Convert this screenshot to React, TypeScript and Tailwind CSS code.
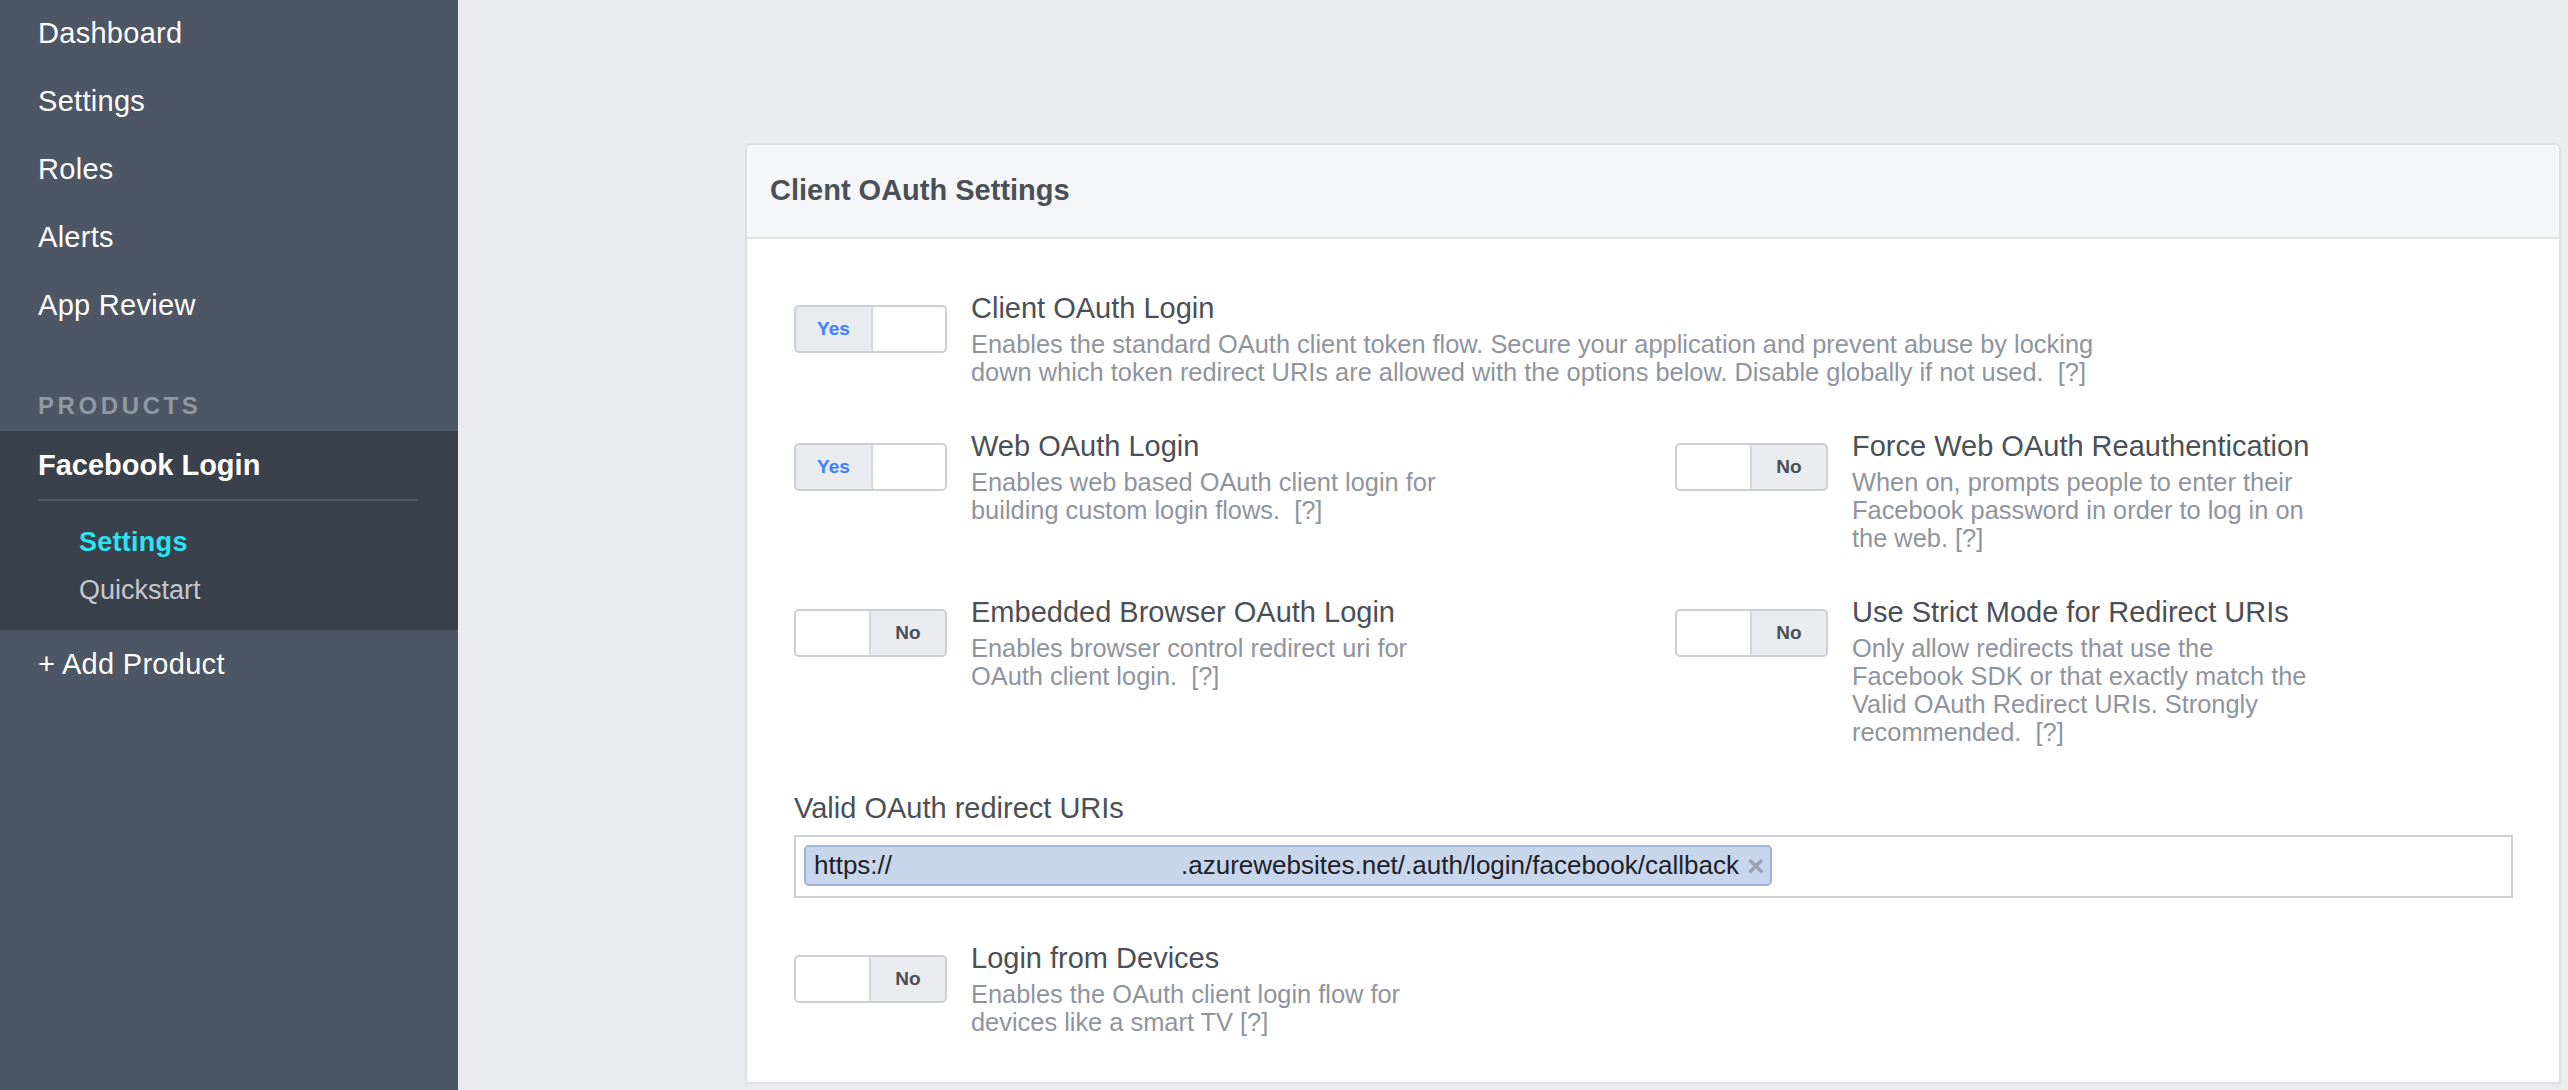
import React from 'react';

function Toggle({ on }: { on: boolean }) {
  return (
    <div className="mt-[15px] flex h-[48px] w-[153px] shrink-0 overflow-hidden rounded-[5px] border-2 border-[#ccd0d5] bg-[#e9ebee]">
      {on ? (
        <>
          <div className="flex w-[75px] items-center justify-center text-[19px] font-bold text-[#4080ff]">Yes</div>
          <div className="flex-1 rounded-[3px] border-l-2 border-[#d3d6db] bg-white" />
        </>
      ) : (
        <>
          <div className="w-[75px] rounded-[3px] border-r-2 border-[#d3d6db] bg-white" />
          <div className="flex flex-1 items-center justify-center text-[19px] font-bold text-[#4b4f56]">No</div>
        </>
      )}
    </div>
  );
}

function Setting({ on, title, lines }: { on: boolean; title: string; lines: string[] }) {
  return (
    <div className="flex items-start gap-[24px]">
      <Toggle on={on} />
      <div>
        <div className="whitespace-nowrap text-[29px] leading-[36px] text-[#4b4f56]">{title}</div>
        <div className="mt-[4px] whitespace-pre text-[25.4px] leading-[28px] text-[#90949c]">
          {lines.map((l, i) => (
            <div key={i}>{l}</div>
          ))}
        </div>
      </div>
    </div>
  );
}

export default function App() {
  const navItems = ['Dashboard', 'Settings', 'Roles', 'Alerts', 'App Review'];

  return (
    <div className="flex h-[1090px] w-full overflow-hidden font-['Liberation_Sans',Arial,sans-serif]">
      {/* sidebar */}
      <aside className="w-[458px] shrink-0 bg-[#4e5665]">
        {navItems.map((item) => (
          <div key={item} className="flex h-[68px] items-center pl-[38px] text-[29px] tracking-[0.01em] text-white">
            {item}
          </div>
        ))}
        <div className="mt-[42px] h-[48px] pl-[38px] text-[24px] font-bold uppercase leading-[48px] tracking-[0.15em] text-[#9197a3]">
          Products
        </div>
        <div className="mt-[1px] bg-[#3a404c] pb-[20px] pt-[14px]">
          <div className="pl-[38px] text-[29px] font-bold leading-[40px] text-white">Facebook Login</div>
          <div className="ml-[38px] mr-[40px] mt-[14px] h-[2px] bg-[#515868]" />
          <div className="mt-[21px] pl-[79px] text-[27px] font-bold leading-[40px] tracking-[0.01em] text-[#2de3f0]">Settings</div>
          <div className="mt-[8px] pl-[79px] text-[27px] leading-[40px] text-[#c4c8ce]">Quickstart</div>
        </div>
        <div className="mt-[14px] pl-[38px] text-[29px] leading-[40px] tracking-[0.01em] text-white">+ Add Product</div>
      </aside>

      {/* main */}
      <main className="flex-1 bg-[#e9ebee] pl-[287px] pr-[7px] pt-[143px]">
        <div className="overflow-hidden rounded-t-[6px] border-2 border-[#dddfe2] bg-white">
          <div className="flex h-[94px] items-center border-b-2 border-[#e2e4e7] bg-[#f5f6f7] pl-[23px]">
            <span className="text-[29px] font-bold text-[#4b4f56]">Client OAuth Settings</span>
          </div>

          <div className="pb-[46px] pl-[47px] pr-[46px] pt-[51px]">
            <Setting
              on
              title="Client OAuth Login"
              lines={[
                'Enables the standard OAuth client token flow. Secure your application and prevent abuse by locking',
                'down which token redirect URIs are allowed with the options below. Disable globally if not used.  [?]',
              ]}
            />

            <div className="mt-[42px] grid grid-cols-[881px_1fr]">
              <Setting
                on
                title="Web OAuth Login"
                lines={['Enables web based OAuth client login for', 'building custom login flows.  [?]']}
              />
              <Setting
                on={false}
                title="Force Web OAuth Reauthentication"
                lines={['When on, prompts people to enter their', 'Facebook password in order to log in on', 'the web. [?]']}
              />
            </div>

            <div className="mt-[42px] grid grid-cols-[881px_1fr]">
              <Setting
                on={false}
                title="Embedded Browser OAuth Login"
                lines={['Enables browser control redirect uri for', 'OAuth client login.  [?]']}
              />
              <Setting
                on={false}
                title="Use Strict Mode for Redirect URIs"
                lines={[
                  'Only allow redirects that use the',
                  'Facebook SDK or that exactly match the',
                  'Valid OAuth Redirect URIs. Strongly',
                  'recommended.  [?]',
                ]}
              />
            </div>

            <div className="mt-[44px] text-[29px] leading-[36px] text-[#4b4f56]">Valid OAuth redirect URIs</div>
            <div className="mt-[9px] flex h-[63px] items-start border-2 border-[#ccd0d5] bg-white pl-[8px] pt-[8px]">
              <div className="flex h-[41px] items-center rounded-[5px] border-2 border-[#9db4d9] bg-[#c7d6ea] pl-[8px] pr-[6px] text-[26px] text-[#1d2129]">
                <span>https://</span>
                <span className="inline-block w-[289px]" />
                <span>.azurewebsites.net/.auth/login/facebook/callback</span>
                <span className="ml-[8px] text-[30px] font-bold leading-none text-[#9ba2ae]">×</span>
              </div>
            </div>

            <div className="mt-[42px]">
              <Setting
                on={false}
                title="Login from Devices"
                lines={['Enables the OAuth client login flow for', 'devices like a smart TV [?]']}
              />
            </div>
          </div>
        </div>
      </main>
    </div>
  );
}
